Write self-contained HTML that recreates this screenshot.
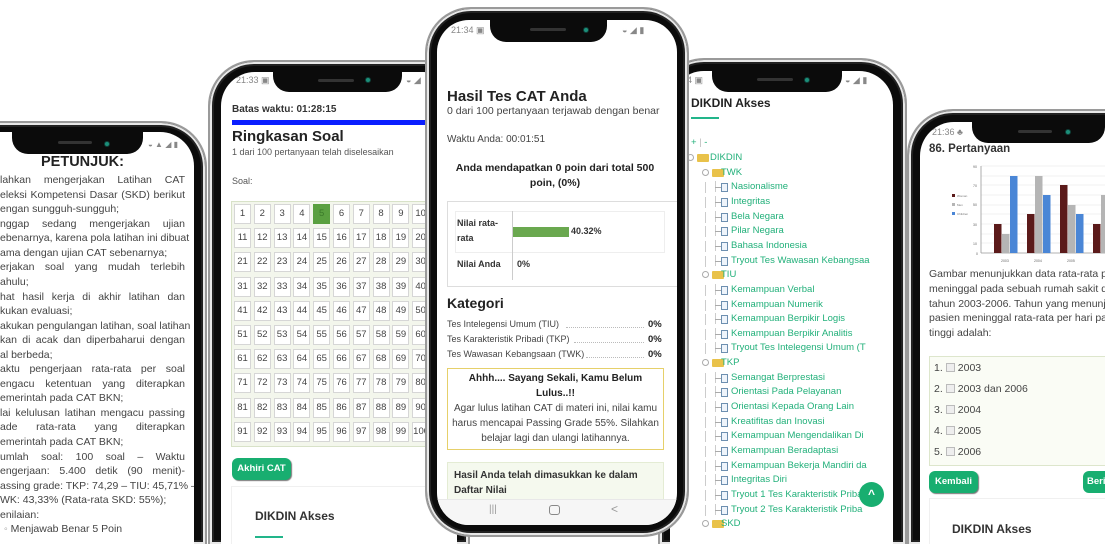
<!DOCTYPE html>
<html><head><meta charset="utf-8">
<style>
*{margin:0;padding:0;box-sizing:border-box}
html,body{width:1105px;height:544px;overflow:hidden;background:#fff}
body{font-family:"Liberation Sans",sans-serif;color:#333}
#wrap{position:relative;width:1105px;height:544px;overflow:hidden}
.ph{position:absolute;background:#0b0b0b;border:2px solid #9a9a9a;box-shadow:inset 0 0 0 2px #e8e8e8,inset 0 0 0 4px #222;border-radius:46px}
.cut{border-bottom:none;border-bottom-left-radius:0;border-bottom-right-radius:0}
.sc{position:absolute;background:#fff;overflow:hidden;border-radius:34px}
.sc.cut{border-bottom-left-radius:0;border-bottom-right-radius:0}
.pg{position:absolute;width:1105px;height:544px}
.pg div,.pg span{position:absolute;white-space:nowrap}
.notch{background:#0b0b0b;border-radius:0 0 16px 16px}
.spk{background:#333;height:3px;border-radius:2px}
.cam{width:6px;height:6px;border-radius:50%;background:#1c8f7a;border:1px solid #0f3f38}
.st{font-size:9px;color:#888}
.j{text-align:justify;text-align-last:justify;width:185px;font-size:10.5px;color:#444}
.l{font-size:10.5px;color:#444}
.cell{width:17px;height:20px;border:1px solid #d6d6d6;background:#fff;font-size:9.5px;color:#444;text-align:center;line-height:18px}
.b{font-weight:bold}
.tr{font-size:9.5px;color:#22b07a}
.fi{width:7px;height:9px;border:1px solid #6d8fb0;background:#eef4fb}
.vl{width:1px;height:11px;background:#ccc}
.hl{width:6px;height:1px;background:#aaa}
.fo{width:12px;height:8px;background:#e9c24a;border-radius:1px}
.mi{width:7px;height:7px;border:1px solid #aaa;border-radius:50%;font-size:6px}
.cb{display:inline-block;width:9px;height:9px;border:1px solid #bbb;background:#eee;vertical-align:-1px;margin:0 3px;position:static!important}
</style></head><body><div id="wrap">

<!-- Phone 1 -->
<div class="ph cut" style="left:-60px;top:121px;width:267px;height:423px"></div>
<div class="sc cut" style="left:-50px;top:132px;width:244px;height:412px">
 <div class="pg" style="left:50px;top:-132px">
  <div class="notch" style="left:12px;top:132px;width:131px;height:22px"></div>
  <div class="spk" style="left:58px;top:141px;width:34px"></div>
  <div class="cam" style="left:104px;top:141px"></div>
  <div class="st" style="left:148px;top:140px;font-size:8px">◒ ▲ ◢ ▮</div>
  <div class="b" style="left:41px;top:154px;font-size:14.5px;color:#222">PETUNJUK:</div>
  <div class="j" style="left:0;top:174px">lahkan mengerjakan Latihan CAT</div>
  <div class="j" style="left:0;top:189px">eleksi Kompetensi Dasar (SKD) berikut</div>
  <div class="l" style="left:0;top:203px">engan sungguh-sungguh;</div>
  <div class="j" style="left:0;top:218px">nggap sedang mengerjakan ujian</div>
  <div class="j" style="left:0;top:232px">ebenarnya, karena pola latihan ini dibuat</div>
  <div class="l" style="left:0;top:247px">ama dengan ujian CAT sebenarnya;</div>
  <div class="j" style="left:0;top:261px">erjakan soal yang mudah terlebih</div>
  <div class="l" style="left:0;top:276px">ahulu;</div>
  <div class="j" style="left:0;top:291px">hat hasil kerja di akhir latihan dan</div>
  <div class="l" style="left:0;top:305px">kukan evaluasi;</div>
  <div class="j" style="left:0;top:320px">akukan pengulangan latihan, soal latihan</div>
  <div class="j" style="left:0;top:334px">kan di acak dan diperbaharui dengan</div>
  <div class="l" style="left:0;top:349px">al berbeda;</div>
  <div class="j" style="left:0;top:363px">aktu pengerjaan rata-rata per soal</div>
  <div class="j" style="left:0;top:378px">engacu ketentuan yang diterapkan</div>
  <div class="l" style="left:0;top:392px">emerintah pada CAT BKN;</div>
  <div class="j" style="left:0;top:407px">lai kelulusan latihan mengacu passing</div>
  <div class="j" style="left:0;top:421px">ade rata-rata yang diterapkan</div>
  <div class="l" style="left:0;top:436px">emerintah pada CAT BKN;</div>
  <div class="j" style="left:0;top:451px">umlah soal: 100 soal – Waktu</div>
  <div class="j" style="left:0;top:465px">engerjaan: 5.400 detik (90 menit)-</div>
  <div class="j" style="left:0;top:480px">assing grade: TKP: 74,29 – TIU: 45,71% –</div>
  <div class="l" style="left:0;top:494px">WK: 43,33% (Rata-rata SKD: 55%);</div>
  <div class="l" style="left:0;top:509px">enilaian:</div>
  <div class="l" style="left:4px;top:523px"><span style="position:static;color:#999">◦</span> Menjawab Benar 5 Poin</div>
 </div>
</div>

<!-- Phone 2 -->
<div class="ph cut" style="left:208px;top:60px;width:262px;height:484px"></div>
<div class="sc cut" style="left:221px;top:72px;width:236px;height:472px">
 <div class="pg" style="left:-221px;top:-72px">
  <div class="notch" style="left:273px;top:72px;width:129px;height:20px"></div>
  <div class="spk" style="left:318px;top:79px;width:36px"></div>
  <div class="cam" style="left:365px;top:77px"></div>
  <div class="st" style="left:236px;top:75px">21:33 ▣</div>
  <div class="st" style="left:406px;top:75px">◒ ◢</div>
  <div class="b" style="left:232px;top:104px;font-size:10px;color:#333">Batas waktu: 01:28:15</div>
  <div style="left:232px;top:120px;width:220px;height:5px;background:#0a1eff"></div>
  <div class="b" style="left:232px;top:128px;font-size:15px;color:#222">Ringkasan Soal</div>
  <div style="left:232px;top:147px;font-size:9px;color:#555">1 dari 100 pertanyaan telah diselesaikan</div>
  <div style="left:232px;top:176px;font-size:9px;color:#555">Soal:</div>
  <div style="left:231px;top:201px;width:230px;height:246px;background:#f3f6ec;border:1px solid #d8e2c8"></div>
  <div style="left:234px;top:204px;display:grid;grid-template-columns:repeat(10,17px);column-gap:2.8px;row-gap:4.2px" id="g">
  </div>
  <div class="b" style="left:232px;top:458px;width:59px;height:22px;background:#18ae70;border-radius:6px;color:#fff;font-size:9.5px;line-height:22px;text-align:center;box-shadow:1px 1px 1px #777">Akhiri CAT</div>
  <div style="left:231px;top:486px;width:230px;height:58px;border:1px solid #f0f0f0;border-bottom:none;background:#fff"></div>
  <div class="b" style="left:255px;top:509px;font-size:12px;color:#333">DIKDIN Akses</div>
  <div style="left:255px;top:536px;width:28px;height:2px;background:#22b58a"></div>
 </div>
</div>

<!-- Phone 4 -->
<div class="ph cut" style="left:658px;top:58px;width:249px;height:486px"></div>
<div class="sc cut" style="left:670px;top:71px;width:223px;height:473px">
 <div class="pg" style="left:-670px;top:-71px">
  <div class="notch" style="left:712px;top:71px;width:130px;height:21px"></div>
  <div class="spk" style="left:757px;top:78px;width:36px"></div>
  <div class="cam" style="left:804px;top:77px"></div>
  <div class="st" style="left:682px;top:75px">34 ▣</div>
  <div class="st" style="left:845px;top:75px">◒ ◢ ▮</div>
  <div class="b" style="left:691px;top:96px;font-size:12px;color:#222">DIKDIN Akses</div>
  <div style="left:691px;top:117px;width:28px;height:2px;background:#22b58a"></div>
  <div class="tr" style="left:691px;top:137px">+ <span style="position:static;color:#bbb">|</span> -</div>
  <div id="tree"></div>
  <div style="left:859px;top:482px;width:25px;height:25px;border-radius:50%;background:#18ae70;color:#fff;font-size:12px;font-weight:bold;text-align:center;line-height:24px">^</div>
 </div>
</div>

<!-- Phone 5 -->
<div class="ph cut" style="left:907px;top:109px;width:260px;height:435px"></div>
<div class="sc cut" style="left:920px;top:122px;width:240px;height:422px">
 <div class="pg" style="left:-920px;top:-122px">
  <div class="notch" style="left:972px;top:122px;width:133px;height:21px"></div>
  <div class="spk" style="left:1018px;top:130px;width:34px"></div>
  <div class="cam" style="left:1065px;top:129px"></div>
  <div class="st" style="left:932px;top:127px">21:36 ♣</div>
  <div class="b" style="left:929px;top:143px;font-size:11.5px;color:#333">86. Pertanyaan</div>
  <svg style="position:absolute;left:0;top:0" width="1105" height="544">
   <g stroke="#e2e2e2" stroke-width="0.6">
    <line x1="981" y1="166" x2="1105" y2="166"/><line x1="981" y1="176" x2="1105" y2="176"/><line x1="981" y1="185" x2="1105" y2="185"/><line x1="981" y1="195" x2="1105" y2="195"/><line x1="981" y1="205" x2="1105" y2="205"/><line x1="981" y1="214" x2="1105" y2="214"/><line x1="981" y1="224" x2="1105" y2="224"/><line x1="981" y1="234" x2="1105" y2="234"/><line x1="981" y1="243" x2="1105" y2="243"/>
   </g>
   <line x1="981" y1="253" x2="1105" y2="253" stroke="#999" stroke-width="0.8"/>
   <line x1="981" y1="166" x2="981" y2="253" stroke="#999" stroke-width="0.8"/>
   <g fill="#5b1a1a"><rect x="994" y="224" width="7.5" height="29"/><rect x="1027" y="214" width="7.5" height="39"/><rect x="1060" y="185" width="7.5" height="68"/><rect x="1093" y="224" width="7.5" height="29"/></g>
   <g fill="#b5b5b5"><rect x="1002" y="234" width="7.5" height="19"/><rect x="1035" y="176" width="7.5" height="77"/><rect x="1068" y="205" width="7.5" height="48"/><rect x="1101" y="195" width="7.5" height="58"/></g>
   <g fill="#4a86d6"><rect x="1010" y="176" width="7.5" height="77"/><rect x="1043" y="195" width="7.5" height="58"/><rect x="1076" y="214" width="7.5" height="39"/></g>
   <g font-size="3.5" fill="#666" font-family="Liberation Sans">
    <text x="1001" y="262">2003</text><text x="1034" y="262">2004</text><text x="1067" y="262">2005</text>
    <text x="973" y="168">90</text><text x="973" y="187">70</text><text x="973" y="206">50</text><text x="973" y="226">30</text><text x="973" y="245">10</text><text x="976" y="255">0</text>
   </g>
   <rect x="952" y="194" width="3" height="3" fill="#5b1a1a"/><rect x="952" y="203" width="3" height="3" fill="#b5b5b5"/><rect x="952" y="212" width="3" height="3" fill="#4a86d6"/>
   <g font-size="3" fill="#777" font-family="Liberation Sans"><text x="957" y="197">Woman</text><text x="957" y="206">Men</text><text x="957" y="215">Children</text></g>
  </svg>
  <div style="left:929px;top:268px;font-size:10.5px;color:#444">Gambar menunjukkan data rata-rata pasien</div>
  <div style="left:929px;top:283px;font-size:10.5px;color:#444">meninggal pada sebuah rumah sakit dari</div>
  <div style="left:929px;top:298px;font-size:10.5px;color:#444">tahun 2003-2006. Tahun yang menunjukkan</div>
  <div style="left:929px;top:312px;font-size:10.5px;color:#444">pasien meninggal rata-rata per hari paling</div>
  <div style="left:929px;top:327px;font-size:10.5px;color:#444">tinggi adalah:</div>
  <div style="left:929px;top:356px;width:200px;height:110px;background:#fafcf5;border:1px solid #dde6cc"></div>
  <div class="l" style="left:934px;top:362px">1.<span class="cb"></span>2003</div>
  <div class="l" style="left:934px;top:383px">2.<span class="cb"></span>2003 dan 2006</div>
  <div class="l" style="left:934px;top:404px">3.<span class="cb"></span>2004</div>
  <div class="l" style="left:934px;top:425px">4.<span class="cb"></span>2005</div>
  <div class="l" style="left:934px;top:446px">5.<span class="cb"></span>2006</div>
  <div class="b" style="left:929px;top:471px;width:49px;height:22px;background:#18ae70;border-radius:6px;color:#fff;font-size:9.5px;line-height:22px;text-align:center;box-shadow:1px 1px 1px #777">Kembali</div>
  <div class="b" style="left:1083px;top:471px;width:49px;height:22px;background:#18ae70;border-radius:6px;color:#fff;font-size:9.5px;line-height:22px;padding-left:4px">Berikutnya</div>
  <div style="left:929px;top:498px;width:200px;height:46px;border:1px solid #f0f0f0;border-bottom:none"></div>
  <div class="b" style="left:952px;top:522px;font-size:12px;color:#333">DIKDIN Akses</div>
 </div>
</div>

<!-- Phone 3 (front) -->
<div class="ph" style="left:425px;top:7px;width:264px;height:530px"></div>
<div class="sc" style="left:437px;top:20px;width:240px;height:505px;border-radius:32px">
 <div class="pg" style="left:-437px;top:-20px">
  <div class="notch" style="left:490px;top:20px;width:117px;height:22px"></div>
  <div class="spk" style="left:530px;top:28px;width:36px"></div>
  <div class="cam" style="left:583px;top:27px"></div>
  <div class="st" style="left:451px;top:25px">21:34 ▣</div>
  <div class="st" style="left:622px;top:25px">◒ ◢ ▮</div>
  <div class="b" style="left:447px;top:88px;font-size:15px;color:#222">Hasil Tes CAT Anda</div>
  <div style="left:447px;top:105px;font-size:10.5px;color:#444">0 dari 100 pertanyaan terjawab dengan benar</div>
  <div style="left:447px;top:134px;font-size:10px;color:#444">Waktu Anda: 00:01:51</div>
  <div class="b" style="left:447px;top:162px;width:216px;text-align:center;font-size:10.5px;color:#222">Anda mendapatkan 0 poin dari total 500</div>
  <div class="b" style="left:447px;top:177px;width:216px;text-align:center;font-size:10.5px;color:#222">poin, (0%)</div>
  <div style="left:447px;top:201px;width:240px;height:86px;border:1px solid #ddd"></div>
  <div style="left:455px;top:211px;width:210px;height:42px;border:1px solid #eee"></div>
  <div style="left:512px;top:211px;width:1px;height:69px;background:#ccc"></div>
  <div class="b" style="left:457px;top:218px;font-size:9px;color:#333">Nilai rata-</div>
  <div class="b" style="left:457px;top:233px;font-size:9px;color:#333">rata</div>
  <div style="left:513px;top:227px;width:56px;height:10px;background:#6aa84f"></div>
  <div class="b" style="left:571px;top:226px;font-size:9px;color:#333">40.32%</div>
  <div class="b" style="left:457px;top:259px;font-size:9px;color:#333">Nilai Anda</div>
  <div class="b" style="left:517px;top:259px;font-size:9px;color:#333">0%</div>
  <div class="b" style="left:447px;top:295px;font-size:14px;color:#222">Kategori</div>
  <div style="left:447px;top:319px;font-size:9px;color:#444">Tes Intelegensi Umum (TIU)</div>
  <div style="left:447px;top:334px;font-size:9px;color:#444">Tes Karakteristik Pribadi (TKP)</div>
  <div style="left:447px;top:349px;font-size:9px;color:#444">Tes Wawasan Kebangsaan (TWK)</div>
  <div style="left:566px;top:327px;width:78px;border-top:1px dotted #bbb"></div>
  <div style="left:574px;top:342px;width:70px;border-top:1px dotted #bbb"></div>
  <div style="left:586px;top:357px;width:58px;border-top:1px dotted #bbb"></div>
  <div class="b" style="left:648px;top:319px;font-size:9.5px;color:#222">0%</div>
  <div class="b" style="left:648px;top:334px;font-size:9.5px;color:#222">0%</div>
  <div class="b" style="left:648px;top:349px;font-size:9.5px;color:#222">0%</div>
  <div style="left:447px;top:368px;width:217px;height:82px;border:1px solid #e6d06a;background:#fff"></div>
  <div class="b" style="left:447px;top:373px;width:217px;text-align:center;font-size:10px;color:#222">Ahhh.... Sayang Sekali, Kamu Belum</div>
  <div class="b" style="left:447px;top:388px;width:217px;text-align:center;font-size:10px;color:#222">Lulus..!!</div>
  <div style="left:447px;top:403px;width:217px;text-align:center;font-size:10px;color:#444">Agar lulus latihan CAT di materi ini, nilai kamu</div>
  <div style="left:447px;top:418px;width:217px;text-align:center;font-size:10px;color:#444">harus mencapai Passing Grade 55%. Silahkan</div>
  <div style="left:447px;top:433px;width:217px;text-align:center;font-size:10px;color:#444">belajar lagi dan ulangi latihannya.</div>
  <div style="left:447px;top:462px;width:217px;height:50px;border:1px solid #e4ecd4;background:#f5f9ee"></div>
  <div class="b" style="left:454px;top:470px;font-size:10px;color:#333">Hasil Anda telah dimasukkan ke dalam</div>
  <div class="b" style="left:454px;top:485px;font-size:10px;color:#333">Daftar Nilai</div>
  <div style="left:437px;top:499px;width:240px;height:26px;background:#f6f6f6;border-top:1px solid #e8e8e8"></div>
  <div style="left:489px;top:504px;font-size:10px;color:#999">|||</div>
  <div style="left:549px;top:505px;width:11px;height:10px;border:1.3px solid #888;border-radius:3px"></div>
  <div style="left:611px;top:502px;font-size:12px;color:#999">&lt;</div>
 </div>
</div>

</div>
<script>
var g=document.getElementById('g');var h='';
for(var i=1;i<=100;i++){h+='<div class="cell" style="position:static'+(i==5?';background:#5aa040;color:#3b7a2a;border-color:#5aa040':'')+'">'+i+'</div>';}
g.innerHTML=h;
var rows=[
[0,'DIKDIN'],[1,'TWK'],[2,'Nasionalisme'],[2,'Integritas'],[2,'Bela Negara'],[2,'Pilar Negara'],[2,'Bahasa Indonesia'],[2,'Tryout Tes Wawasan Kebangsaa'],
[1,'TIU'],[2,'Kemampuan Verbal'],[2,'Kemampuan Numerik'],[2,'Kemampuan Berpikir Logis'],[2,'Kemampuan Berpikir Analitis'],[2,'Tryout Tes Intelegensi Umum (T'],
[1,'TKP'],[2,'Semangat Berprestasi'],[2,'Orientasi Pada Pelayanan'],[2,'Orientasi Kepada Orang Lain'],[2,'Kreatifitas dan Inovasi'],[2,'Kemampuan Mengendalikan Di'],[2,'Kemampuan Beradaptasi'],[2,'Kemampuan Bekerja Mandiri da'],[2,'Integritas Diri'],[2,'Tryout 1 Tes Karakteristik Priba'],[2,'Tryout 2 Tes Karakteristik Priba'],
[1,'SKD']];
var t='';
for(var k=0;k<rows.length;k++){var y=158+k*14.65;var r=rows[k];
 if(r[0]==0){t+='<div class="mi" style="left:687px;top:'+(y-4)+'px"></div><div class="fo" style="left:697px;top:'+(y-4)+'px"></div><div class="tr" style="left:710px;top:'+(y-6)+'px">'+r[1]+'</div>';}
 else if(r[0]==1){t+='<div class="mi" style="left:702px;top:'+(y-4)+'px"></div><div class="fo" style="left:712px;top:'+(y-4)+'px"></div><div class="tr" style="left:721px;top:'+(y-6)+'px">'+r[1]+'</div>';}
 else{t+='<div class="vl" style="left:705px;top:'+(y-5)+'px"></div><div class="vl" style="left:715px;top:'+(y-6)+'px"></div><div class="hl" style="left:715px;top:'+y+'px"></div><div class="fi" style="left:721px;top:'+(y-4)+'px"></div><div class="tr" style="left:731px;top:'+(y-6)+'px">'+r[1]+'</div>';}
}
document.getElementById('tree').outerHTML=t;
</script>
</body></html>
